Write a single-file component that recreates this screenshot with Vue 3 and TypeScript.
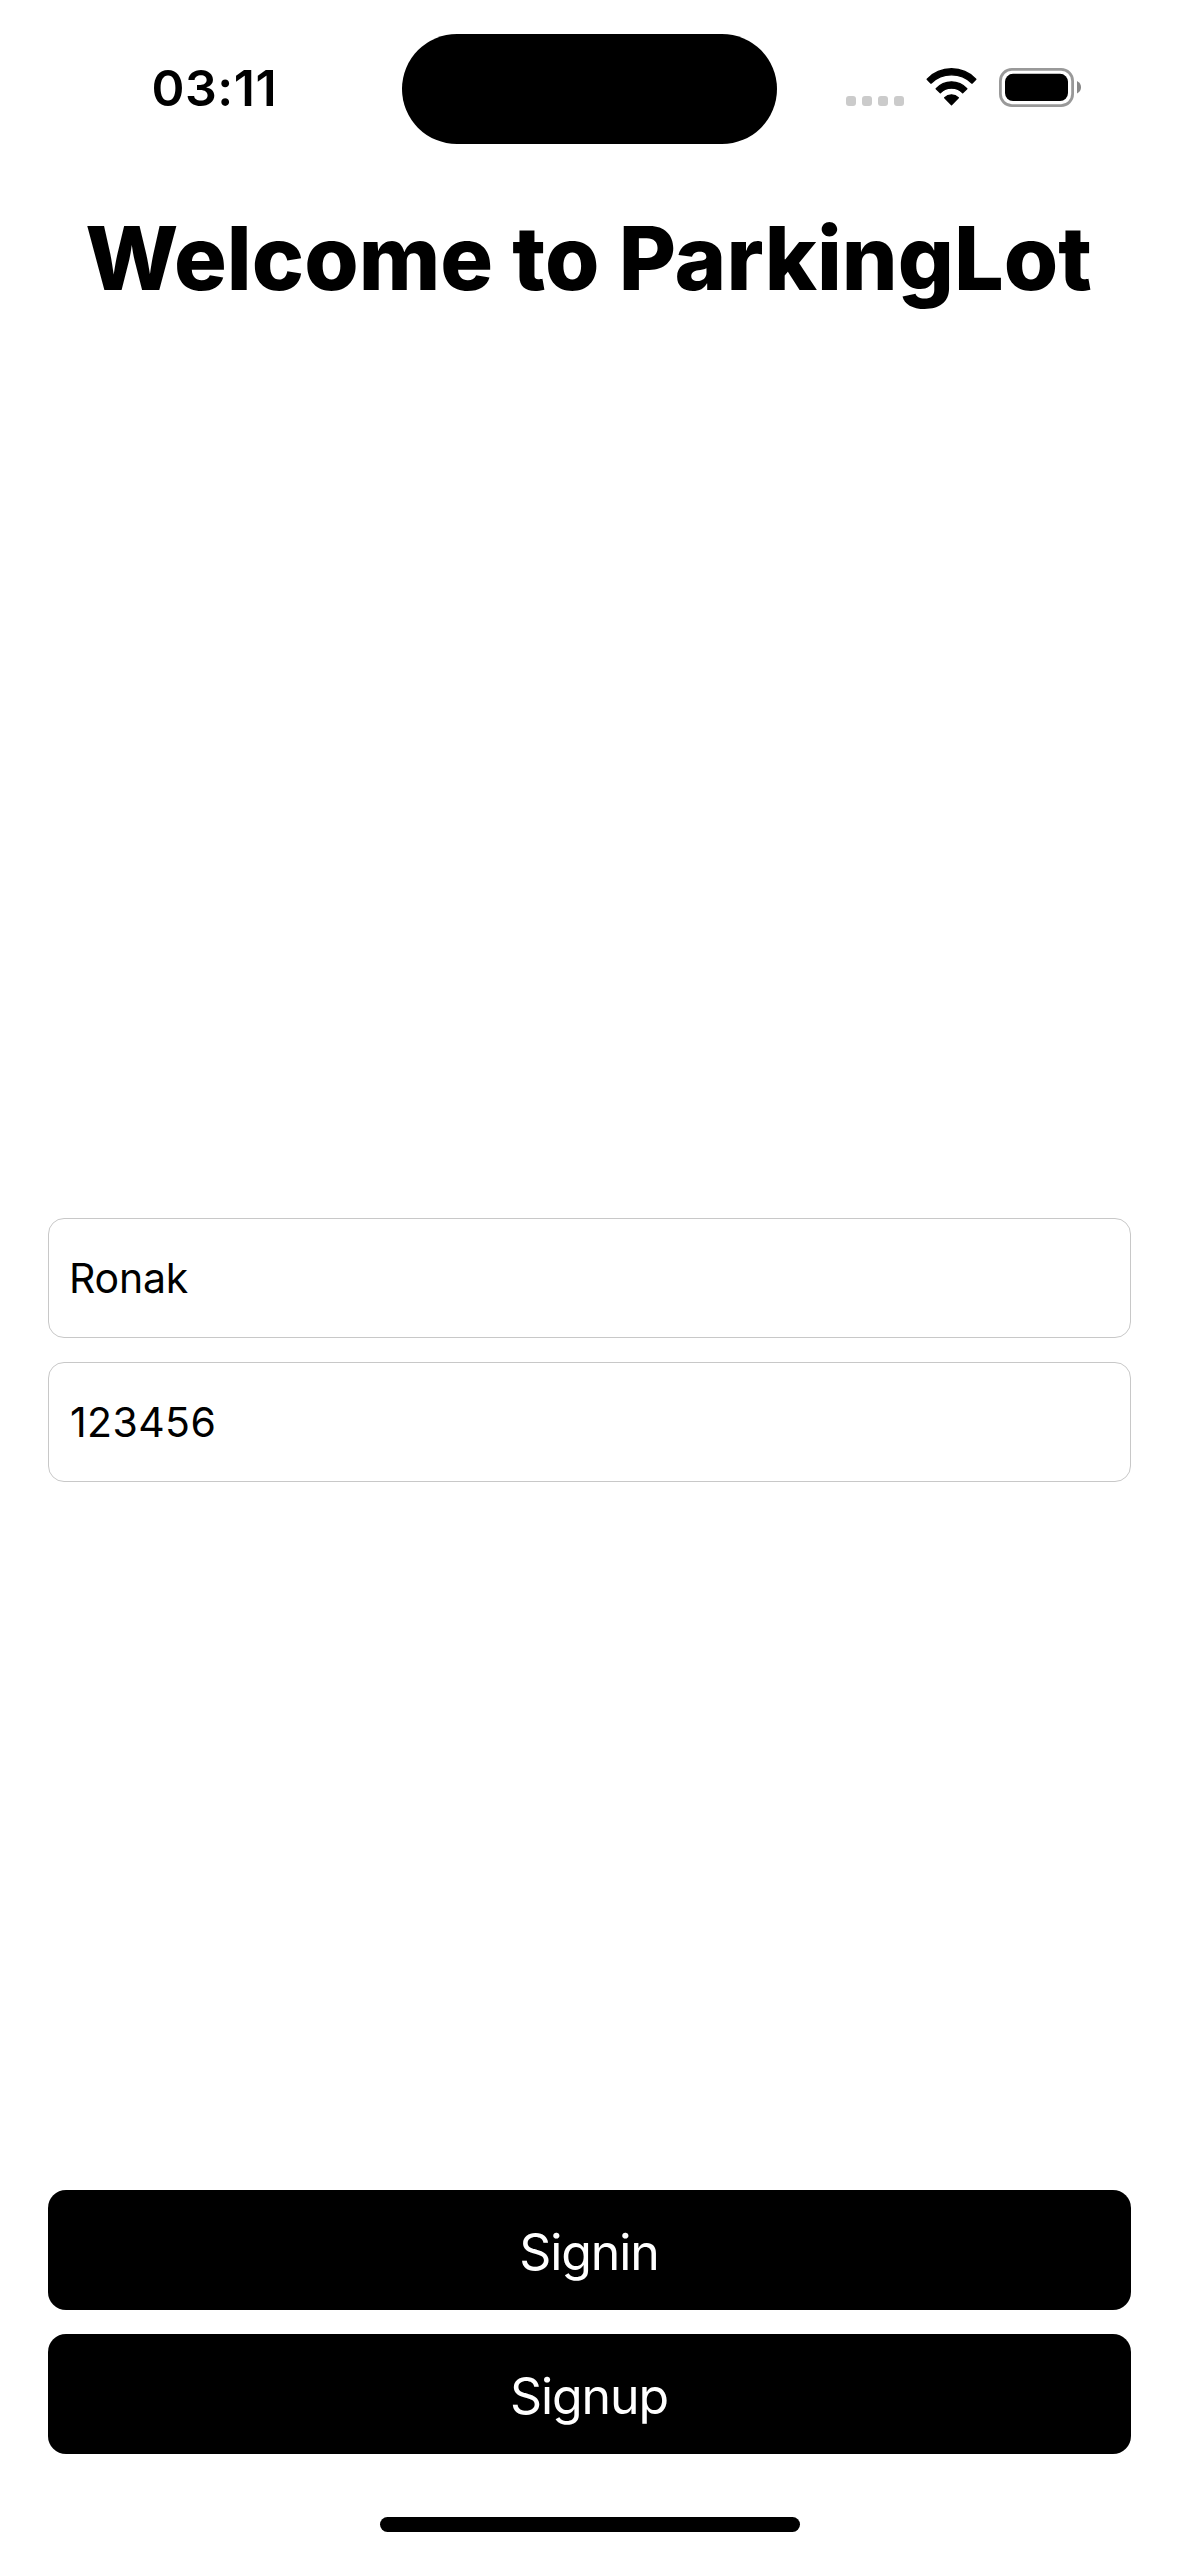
<script setup lang="ts">
import { ref } from 'vue'

const time = ref<string>('03:11')
const fields = ref<string[]>(['Ronak', '123456'])
const actions: string[] = ['Signin', 'Signup']
</script>

<template>
  <main class="screen">
    <header class="status-bar">
      <div class="time"><span>{{ time }}</span></div>
      <div class="island"></div>
      <div class="indicators">
        <svg class="signal" width="58" height="10" viewBox="0 0 58 10">
          <rect v-for="n in 4" :key="n" :x="(n - 1) * 16" y="0" width="10" height="10" rx="3" fill="#cbcbcb" />
        </svg>
        <svg class="wifi" width="51" height="38" viewBox="318 85 153 114">
          <g stroke="#000" stroke-width="4" stroke-linejoin="round">
            <path d="M321.5 118.500A101 101 0 0 1 467.500 118.500L456 130.500A88 88 0 0 0 333 130.500Z" />
            <path d="M348.500 147A62 62 0 0 1 440.500 147L428 159.500A47 47 0 0 0 361 159.500Z" />
            <path d="M374 174A29 29 0 0 1 415 174L394.500 195.500Z" />
          </g>
        </svg>
        <svg class="battery" width="82" height="39" viewBox="0 0 82 39">
          <rect x="1.4" y="1.4" width="72.2" height="36.2" rx="11.5" fill="none" stroke="#999" stroke-width="2.8" />
          <rect x="6" y="5.8" width="63" height="27.2" rx="8" fill="#000" />
          <path d="M78 13Q82 15 82 19.3Q82 23.5 78 25.5Z" fill="#888" />
        </svg>
      </div>
    </header>

    <h1 class="title">Welcome to ParkingLot</h1>

    <section class="form">
      <div v-for="value in fields" :key="value" class="field"><span>{{ value }}</span></div>
    </section>

    <footer class="actions">
      <button v-for="label in actions" :key="label" class="action" type="button">{{ label }}</button>
    </footer>

    <div class="home-indicator"></div>
  </main>
</template>

<style>
body {
  margin: 0;
  background: #fff;
}
</style>

<style scoped>
.screen {
  display: flex;
  flex-direction: column;
  box-sizing: border-box;
  width: 1179px;
  height: 2556px;
  padding-bottom: 24px;
  overflow: hidden;
  background: #fff;
  color: #000;
  font-family: Inter, "Liberation Sans", sans-serif;
}

.status-bar {
  display: grid;
  grid-template-columns: 402px 375px 1fr;
  align-items: start;
  height: 177px;
}

.time {
  padding: 58px 0 0 151.5px;
  font-size: 50px;
  font-weight: 600;
  line-height: 60px;
  letter-spacing: 0.5px;
}

.island {
  height: 110px;
  margin-top: 34px;
  border-radius: 55px;
  background: #000;
}

.indicators {
  display: flex;
  align-items: flex-start;
  padding: 68px 0 0 69px;
}

.signal {
  margin-top: 28px;
}

.wifi {
  margin: 0 0 0 22px;
}

.battery {
  margin-left: 22px;
}

.title {
  margin: 27px 2px 0 0;
  font-size: 88px;
  font-weight: 800;
  line-height: 108px;
  text-align: center;
  white-space: nowrap;
}

.form {
  display: flex;
  flex-direction: column;
  gap: 24px;
  margin: 906px 48px 0;
}

.field {
  display: flex;
  align-items: center;
  box-sizing: border-box;
  height: 120px;
  padding-left: 20px;
  border: 1px solid #c8c8c8;
  border-radius: 16px;
  font-size: 41px;
  letter-spacing: -0.2px;
}

.field:last-child {
  padding-left: 21px;
  letter-spacing: 0.4px;
}

.actions {
  display: flex;
  flex-direction: column;
  gap: 24px;
  margin: auto 48px 63px;
}

.action {
  height: 120px;
  padding: 4px 1px 0 0;
  border: 0;
  border-radius: 18px;
  background: #000;
  color: #fff;
  font: 400 50px Inter, "Liberation Sans", sans-serif;
  letter-spacing: -1.1px;
}

.home-indicator {
  flex: none;
  align-self: center;
  width: 420px;
  height: 15px;
  border-radius: 8px;
  background: #000;
}
</style>
